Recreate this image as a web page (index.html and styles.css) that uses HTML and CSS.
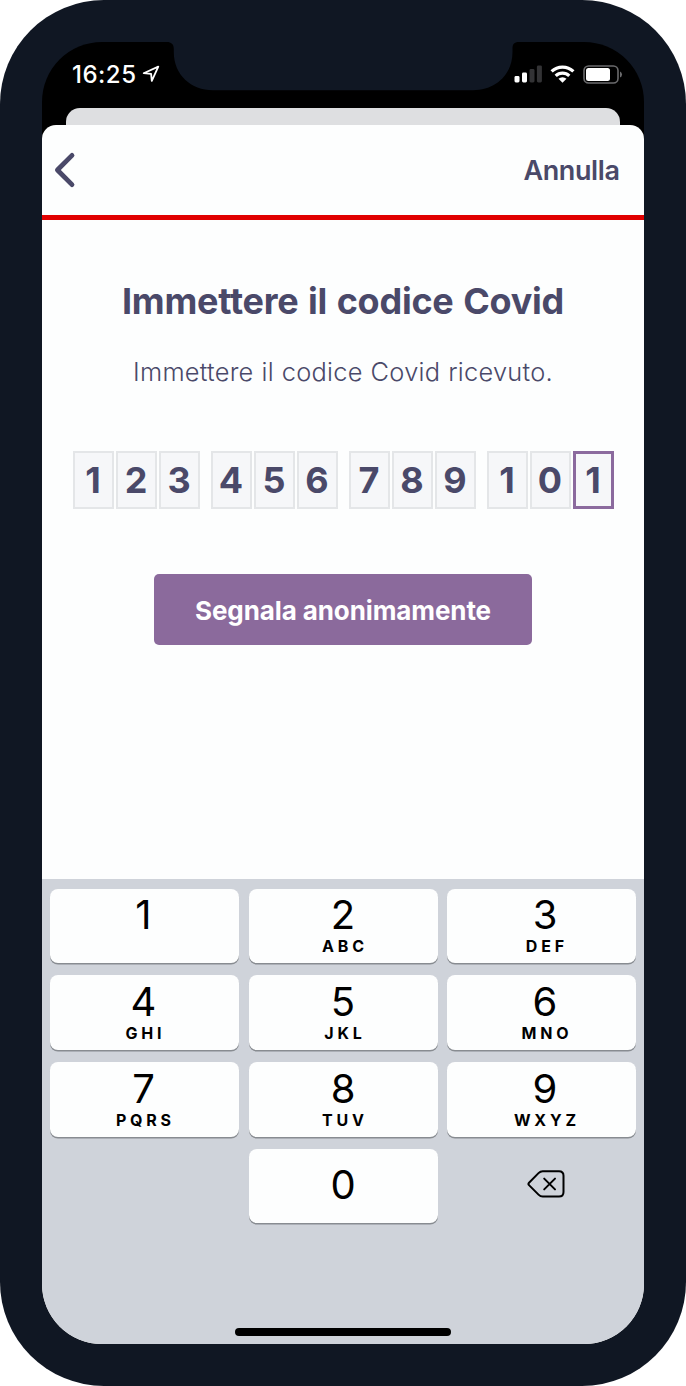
FILE: index.html
```html
<!DOCTYPE html>
<html lang="it">
<head>
<meta charset="utf-8">
<title>Codice Covid</title>
<link rel="stylesheet" href="styles.css">
</head>
<body>
<div class="phone">
  <div class="screen">
    <header class="status">
      <div class="clock"><span class="time">16:25</span>
        <svg class="location" width="18" height="18" viewBox="0 0 18 18"><path d="M1.700 8.200 16.300 1.600 9.800 15.900 9.100 8.900Z" fill="none" stroke="#fff" stroke-width="1.8" stroke-linejoin="round"/></svg>
      </div>
      <div class="indicators">
        <svg class="signal" width="28" height="18" viewBox="0 0 28 18"><rect x="0.500" y="11" width="5" height="6.5" rx="1.4" fill="#fff"/><rect x="8" y="7.5" width="5" height="10" rx="1.4" fill="#fff"/><rect x="15.500" y="4" width="5" height="13.5" rx="1.4" fill="#333335"/><rect x="22.9" y="0.4" width="5" height="17.1" rx="1.4" fill="#333335"/></svg>
        <svg class="wifi" width="25" height="18" viewBox="0 0 25 18"><g fill="none" stroke="#fff" stroke-width="3.2"><path d="M1.6 6.4a15.8 15.8 0 0 1 21.8 0"/><path d="M5.7 10.8a9.8 9.8 0 0 1 13.6 0"/></g><path d="M8.5 13.7a5.9 5.9 0 0 1 8 0l-4 4.1Z" fill="#fff"/></svg>
        <svg class="battery" width="40" height="19" viewBox="0 0 40 19"><rect x="1" y="1" width="34" height="17" rx="4.6" fill="none" stroke="#6b6b6d" stroke-width="1.6"/><rect x="3" y="3.1" width="24" height="12.8" rx="2.5" fill="#fff"/><path d="M37 6.4q2 .8 2 3.1t-2 3.1Z" fill="#6b6b6d"/></svg>
      </div>
    </header>
    <div class="backsheet"></div>
    <main class="sheet">
      <nav class="nav">
        <svg width="22" height="36" viewBox="0 0 22 36"><path d="M18 3.400 3.400 18 18 32.600" fill="none" stroke="#4a4969" stroke-width="4.8" stroke-linecap="round" stroke-linejoin="round"/></svg>
        <span class="cancel">Annulla</span>
      </nav>
      <section class="content">
        <h1 class="title">Immettere il codice Covid</h1>
        <p class="subtitle">Immettere il codice Covid ricevuto.</p>
        <div class="code">
          <div class="group"><span class="digit">1</span><span class="digit">2</span><span class="digit">3</span></div>
          <div class="group"><span class="digit">4</span><span class="digit">5</span><span class="digit">6</span></div>
          <div class="group"><span class="digit">7</span><span class="digit">8</span><span class="digit">9</span></div>
          <div class="group"><span class="digit">1</span><span class="digit">0</span><span class="digit active">1</span></div>
        </div>
        <button class="submit">Segnala anonimamente</button>
      </section>
      <section class="keyboard">
        <div class="keys">
          <div class="key left top"><b>1</b></div>
          <div class="key top"><b>2</b><i>ABC</i></div>
          <div class="key right top"><b>3</b><i>DEF</i></div>
          <div class="key left"><b>4</b><i>GHI</i></div>
          <div class="key"><b>5</b><i>JKL</i></div>
          <div class="key right"><b>6</b><i>MNO</i></div>
          <div class="key left"><b>7</b><i>PQRS</i></div>
          <div class="key"><b>8</b><i>TUV</i></div>
          <div class="key right"><b>9</b><i>WXYZ</i></div>
          <div></div>
          <div class="key zero"><b>0</b></div>
          <div class="delete"><svg width="38" height="28" viewBox="0 0 38 28" fill="none" stroke="#000" stroke-width="2" stroke-linejoin="round" stroke-linecap="round"><path d="M2 12.7 11.5 3.1Q13.4 1.2 15.7 1.2H32q4.5 0 4.500 4.500V22q0 4.500-4.500 4.500H15.7q-2.3 0-4.2-1.9L2 15.1q-1.2-1.2 0-2.4Z"/><path d="m17.2 8.6 10.8 10.8M28 8.600 17.200 19.400"/></svg></div>
        </div>
        <div class="home"></div>
      </section>
    </main>
    <svg class="notch" width="352" height="49" viewBox="0 0 352 49"><path d="M0 0H352C347 0 345.500 2 345.500 7V10C345.500 33 328 48.200 306 48.200H46C24 48.200 6.800 33 6.800 10V7C6.800 2 4 0 0 0Z" fill="#101723"/></svg>
  </div>
</div>
</body>
</html>
```
FILE: styles.css
```css
* { box-sizing: border-box; }
body { margin: 0; background: #fff; font-family: Inter, "Liberation Sans", sans-serif; color: #4a4969; }
.phone { width: 686px; height: 1386px; padding: 42px; background: #101723; border-radius: 104px; }
.screen { position: relative; display: flex; flex-direction: column; width: 602px; height: 1302px; border-radius: 60px; background: #000; overflow: hidden; }
.notch { position: absolute; left: 125px; top: 0; }
.status { display: flex; justify-content: space-between; height: 66px; padding: 0 21px 0 30px; }
.clock { display: flex; align-items: flex-start; padding-top: 18px; color: #fff; }
.time { width: 70px; font-size: 24px; line-height: 30px; font-weight: 550; letter-spacing: .5px; white-space: nowrap; }
.location { margin-top: 5px; }
.indicators { display: flex; align-items: flex-start; padding-top: 23px; }
.wifi { margin-left: 8px; }
.battery { margin-left: 8px; }
.backsheet { height: 17px; margin: 0 24px; background: #dedfe1; border-radius: 14px 14px 0 0; flex: none; }
.sheet { display: flex; flex-direction: column; flex: 1; min-height: 0; background: #fdfefe; border-radius: 14px 14px 0 0; overflow: hidden; }
.nav { display: flex; align-items: center; justify-content: space-between; height: 95px; padding: 0 24.5px 0 12px; border-bottom: 5px solid #e10000; flex: none; }
.cancel { padding-top: 2px; font-size: 27px; font-weight: 600; line-height: 34px; letter-spacing: -.4px; }
.content { display: flex; flex-direction: column; align-items: center; height: 659px; padding-top: 59px; flex: none; }
.title { margin: 0; font-size: 36px; line-height: 44px; font-weight: 700; letter-spacing: -.24px; word-spacing: 1.3px; white-space: nowrap; }
.subtitle { margin: 33px 0 0; font-size: 25.4px; line-height: 32px; font-weight: 300; letter-spacing: .26px; word-spacing: .5px; white-space: nowrap; }
.code { display: flex; gap: 11px; margin-top: 63px; }
.group { display: grid; grid-template-columns: repeat(3, 41px); gap: 2px; width: 127px; }
.digit { display: flex; align-items: center; justify-content: center; height: 58px; background: #f6f7f9; border: 2px solid #e4e6e8; font-size: 36px; font-weight: 700; }
.active { border: 3px solid #8b6a9e; }
.submit { width: 378px; height: 71px; margin-top: 65px; padding: 2px 0 0; border: 0; border-radius: 5px; background: #8b6a9c; color: #fff; font: 700 26px/32px Inter, "Liberation Sans", sans-serif; letter-spacing: -.1px; }
.keyboard { display: flex; flex: 1; flex-direction: column; align-items: center; justify-content: space-between; padding: 9.5px 8px 8px; background: #cfd3da; color: #000; }
.keys { display: grid; grid-template-columns: repeat(3, 1fr); grid-template-rows: 74px 75px 75px 74px; gap: 12px 9.5px; width: 100%; }
.key { display: flex; flex-direction: column; align-items: center; padding-top: 6.5px; background: #fdfefe; border-radius: 8px; box-shadow: 0 1.5px 0 #888c91; }
.key b { font-size: 40px; line-height: 42px; font-weight: 400; }
.key i { padding-left: 3.8px; font-size: 16px; line-height: 20px; font-style: normal; font-weight: 650; letter-spacing: 3.8px; }
.key.top { padding-top: 5px; }
.key.left { padding-right: 2px; }
.key.right { padding-left: 7px; }
.key.zero { padding-top: 15.5px; }
.delete { display: flex; align-items: center; justify-content: center; padding: 0 0 3px 8px; }
.home { width: 216px; height: 8px; border-radius: 4px; background: #000; }
```
